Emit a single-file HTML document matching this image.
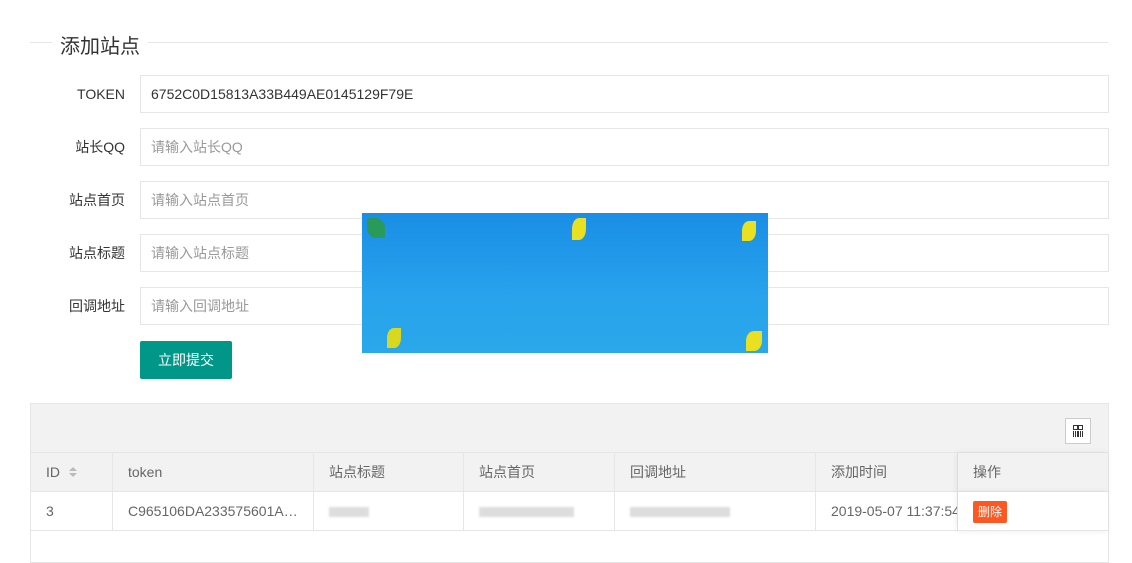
<!DOCTYPE html>
<html><head><meta charset="utf-8"><style>
*{box-sizing:border-box;margin:0;padding:0}
body{width:1132px;height:557px;overflow:hidden;background:#fff;font-family:"Liberation Sans","Noto Sans CJK SC",sans-serif;font-size:14px;color:#333;position:relative}
.abs{position:absolute}
.line{left:30px;top:42px;width:1078px;height:1px;background:#e6e6e6}
.legend{left:52px;top:30px;background:#fff;padding:0 8px;font-size:20px;color:#333}
.lbl{left:30px;width:95px;text-align:right;height:38px;line-height:38px}
.inp{left:140px;width:969px;height:38px;border:1px solid #e6e6e6;line-height:36px;padding-left:10px;color:#999}
.btn{left:140px;top:341px;width:92px;height:38px;background:#009688;color:#fff;line-height:38px;text-align:center;border-radius:2px}
.tbl{left:30px;top:403px;width:1079px;height:160px;border:1px solid #e6e6e6}
.tool{left:31px;top:404px;width:1077px;height:49px;background:#f2f2f2;border-bottom:1px solid #e6e6e6}
.hd{top:453px;height:39px;background:#f2f2f2;border-bottom:1px solid #e6e6e6;border-right:1px solid #e6e6e6;line-height:38px;padding-left:15px;color:#666}
.cell{top:492px;height:39px;border-bottom:1px solid #e6e6e6;border-right:1px solid #e6e6e6;line-height:38px;padding-left:15px;color:#666;white-space:nowrap;overflow:hidden}
.blur{display:inline-block;height:10px;background:#ddd;vertical-align:middle;filter:blur(1px)}
</style></head><body>
<div class="abs line"></div>
<div class="abs legend">添加站点</div>
<div class="abs lbl" style="top:75px">TOKEN</div><div class="abs inp" style="top:75px;color:#333">6752C0D15813A33B449AE0145129F79E</div>
<div class="abs lbl" style="top:128px">站长QQ</div><div class="abs inp" style="top:128px">请输入站长QQ</div>
<div class="abs lbl" style="top:181px">站点首页</div><div class="abs inp" style="top:181px">请输入站点首页</div>
<div class="abs lbl" style="top:234px">站点标题</div><div class="abs inp" style="top:234px">请输入站点标题</div>
<div class="abs lbl" style="top:287px">回调地址</div><div class="abs inp" style="top:287px">请输入回调地址</div>
<div class="abs btn">立即提交</div>
<div class="abs" style="left:362px;top:213px;width:406px;height:140px;background:linear-gradient(180deg,#1a8ee6 0%,#28a3ec 60%,#2aa8ea 100%)">
<div class="abs" style="left:210px;top:5px;width:14px;height:22px;background:#e8e020;border-radius:50% 0"></div>
<div class="abs" style="left:380px;top:8px;width:14px;height:20px;background:#e8e020;border-radius:50% 0"></div>
<div class="abs" style="left:5px;top:5px;width:18px;height:20px;background:#2a9a5a;border-radius:0 50%"></div>
<div class="abs" style="left:25px;top:115px;width:14px;height:20px;background:#d8d820;border-radius:50% 0"></div>
<div class="abs" style="left:384px;top:118px;width:16px;height:20px;background:#e8e020;border-radius:50% 0"></div>
</div>
<div class="abs tbl"></div>
<div class="abs tool"></div>
<div class="abs" style="left:1065px;top:418px;width:26px;height:26px;border:1px solid #ccc;background:#fff">
<svg width="24" height="24" viewBox="0 0 24 24" fill="none" stroke="#333" stroke-width="1"><rect x="7.5" y="6.5" width="4" height="4"/><rect x="12.5" y="6.5" width="4" height="4"/><path d="M7.5 12v6M9.5 12v6M11.5 12v6M12.5 12v6M14.5 12v6M16.5 12v6"/></svg></div>
<div class="abs hd" style="left:31px;width:82px">ID <svg width="10" height="14" viewBox="0 0 10 14" style="vertical-align:-2px;margin-left:4px"><path d="M1 6L5 2L9 6Z M1 8L5 12L9 8Z" fill="#bbb"/></svg></div>
<div class="abs hd" style="left:113px;width:201px">token</div>
<div class="abs hd" style="left:314px;width:150px">站点标题</div>
<div class="abs hd" style="left:464px;width:151px">站点首页</div>
<div class="abs hd" style="left:615px;width:201px">回调地址</div>
<div class="abs hd" style="left:816px;width:142px">添加时间</div>
<div class="abs cell" style="left:31px;width:82px">3</div>
<div class="abs cell" style="left:113px;width:201px">C965106DA233575601A…</div>
<div class="abs cell" style="left:314px;width:150px"><span class="blur" style="width:40px"></span></div>
<div class="abs cell" style="left:464px;width:151px"><span class="blur" style="width:95px"></span></div>
<div class="abs cell" style="left:615px;width:201px"><span class="blur" style="width:100px"></span></div>
<div class="abs cell" style="left:816px;width:142px">2019-05-07 11:37:54</div>
<div class="abs hd" style="left:958px;width:150px;box-shadow:-1px 0 6px rgba(0,0,0,.08);border-right:none">操作</div>
<div class="abs cell" style="left:958px;width:150px;background:#fff;box-shadow:-1px 0 6px rgba(0,0,0,.08);border-right:none"><span style="display:inline-block;background:#ff5722;color:#fff;font-size:12px;height:22px;line-height:22px;padding:0 5px;border-radius:2px;vertical-align:middle">删除</span></div>
</body></html>
